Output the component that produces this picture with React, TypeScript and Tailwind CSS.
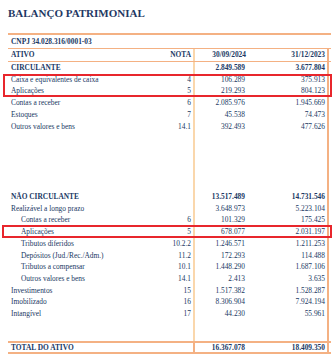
import React from 'react';

type Row = {
  label?: string;
  nota?: string;
  v1?: string;
  v2?: string;
  bold?: boolean;
  indent?: boolean;
};

const circulante: Row[] = [
  { label: 'CIRCULANTE', v1: '2.849.589', v2: '3.677.804', bold: true },
];

const caixaAplic: Row[] = [
  { label: 'Caixa e equivalentes de caixa', nota: '4', v1: '106.289', v2: '375.913' },
  { label: 'Aplicações', nota: '5', v1: '219.293', v2: '804.123' },
];

const restCirc: Row[] = [
  { label: 'Contas a receber', nota: '6', v1: '2.085.976', v2: '1.945.669' },
  { label: 'Estoques', nota: '7', v1: '45.538', v2: '74.473' },
  { label: 'Outros valores e bens', nota: '14.1', v1: '392.493', v2: '477.626' },
  {},
  {},
  {},
  {},
  {},
  { label: 'NÃO CIRCULANTE', v1: '13.517.489', v2: '14.731.546', bold: true },
  { label: 'Realizável a longo prazo', v1: '3.648.973', v2: '5.223.104' },
  { label: 'Contas a receber', nota: '6', v1: '101.329', v2: '175.425', indent: true },
];

const aplicLongo: Row = { label: 'Aplicações', nota: '5', v1: '678.077', v2: '2.031.197', indent: true };

const restNaoCirc: Row[] = [
  { label: 'Tributos diferidos', nota: '10.2.2', v1: '1.246.571', v2: '1.211.253', indent: true },
  { label: 'Depósitos (Jud./Rec./Adm.)', nota: '11.2', v1: '172.293', v2: '114.488', indent: true },
  { label: 'Tributos a compensar', nota: '10.1', v1: '1.448.290', v2: '1.687.106', indent: true },
  { label: 'Outros valores e bens', nota: '14.1', v1: '2.413', v2: '3.635', indent: true },
  { label: 'Investimentos', nota: '15', v1: '1.517.382', v2: '1.528.287' },
  { label: 'Imobilizado', nota: '16', v1: '8.306.904', v2: '7.924.194' },
  { label: 'Intangível', nota: '17', v1: '44.230', v2: '55.961' },
];

function TableRow({ row, short }: { row: Row; short?: boolean }) {
  return (
    <div className={`flex ${short ? 'h-[10.7px]' : 'h-[11.73px]'} items-center whitespace-nowrap ${row.bold ? 'font-bold' : ''}`}>
      <div className="flex w-[187px] items-center border-r-2 border-[#fad7ac] h-full">
        <div className={`flex-1 ${row.indent ? 'pl-[13px]' : 'pl-[3px]'}`}>{row.label}</div>
        <div className="pr-[2px] text-right">{row.nota}</div>
      </div>
      <div className="w-[53px] pr-[3px] text-right">{row.v1}</div>
      <div className="w-[81px] h-full flex items-center justify-end pr-[2px] border-r-2 border-[#f4b183]">{row.v2}</div>
    </div>
  );
}

export default function App() {
  return (
    <div className="w-[333px] h-[360px] bg-white overflow-hidden font-['Liberation_Serif',serif] text-[#203864]">
      <div className="pl-[8px] pt-[6px] text-[11px] leading-[14px] font-bold text-[#1f3864]">
        BALANÇO PATRIMONIAL
      </div>

      <div className="ml-[8px] mt-[13px] w-[323px] text-[7.4px] leading-[11.7px]">
        {/* cabeçalho */}
        <div className="h-[16px] border-t-2 border-b border-[#f4b183] pl-[3px] flex items-center font-bold">
          CNPJ 34.028.316/0001-03
        </div>
        <div className="flex h-[13px] border-b border-[#f4b183] items-center font-bold">
          <div className="flex w-[187px] h-full items-center border-r-2 border-[#fad7ac]">
            <div className="flex-1 pl-[3px]">ATIVO</div>
            <div className="pr-[2px]">NOTA</div>
          </div>
          <div className="w-[53px] pr-[2px] text-right">30/09/2024</div>
          <div className="w-[81px] h-full flex items-center justify-end pr-[2px] border-r-2 border-[#f4b183]">31/12/2023</div>
        </div>

        {circulante.map((r, i) => (
          <TableRow key={`c${i}`} row={r} />
        ))}

        <div className="relative">
          {caixaAplic.map((r, i) => (
            <TableRow key={`a${i}`} row={r} />
          ))}
          <div className="absolute top-0 bottom-0 -left-[5px] -right-[1px] border-2 border-[#e8262c]" />
        </div>

        {restCirc.map((r, i) => (
          <TableRow key={`r${i}`} row={r} />
        ))}

        <div className="relative">
          <TableRow row={aplicLongo} />
          <div className="absolute -top-[1px] bottom-0 -left-[6px] -right-[1px] border-2 border-[#e8262c]" />
        </div>

        {restNaoCirc.map((r, i) => (
          <TableRow key={`n${i}`} row={r} />
        ))}

        <TableRow row={{}} short />
        <TableRow row={{}} short />

        <div className="flex h-[13px] border-t-2 border-b-2 border-[#f4b183] items-center font-bold whitespace-nowrap">
          <div className="w-[187px] h-full flex items-center pl-[3px] border-r-2 border-[#f4b183]">TOTAL DO ATIVO</div>
          <div className="w-[53px] pr-[3px] text-right">16.367.078</div>
          <div className="w-[81px] h-full flex items-center justify-end pr-[2px] border-r-2 border-[#f4b183]">18.409.350</div>
        </div>
      </div>
    </div>
  );
}
